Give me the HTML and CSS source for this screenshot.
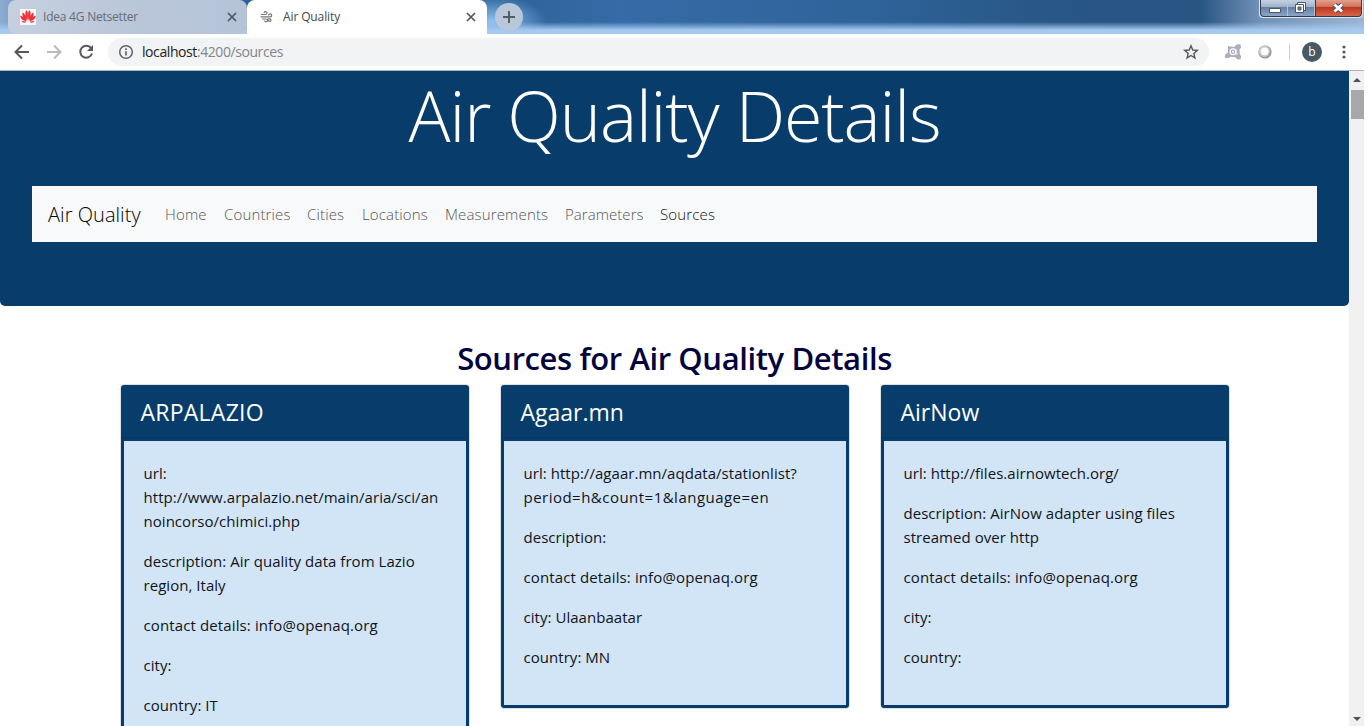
FILE: index.html
```
<!DOCTYPE html>
<html lang="en">
<head>
<meta charset="utf-8">
<title>Air Quality</title>
<link rel="stylesheet" href="styles.css">
</head>
<body>
<div class="window">
  <div class="tabstrip">
    <div class="tab tab-idle">
      <svg class="favicon" width="16" height="16" viewBox="0 0 16 16"><path fill="#f4f6f9" d="M0 0h16v16H0z"/><g fill="#ed3338"><path d="M7.6 11C5 8 4.600 3 6.600 1.300 8 2 8.200 7 7.600 11zM8.400 11C11 8 11.400 3 9.400 1.300 8 2 7.800 7 8.400 11zM7 11.300C3.800 9.800 1.500 6 2.600 3.400 4.500 4 6.500 8 7 11.300zM9 11.300c3.200-1.500 5.500-5.300 4.400-7.900C11.500 4 9.500 8 9 11.300zM6.600 12C3 12.300.3 9.500.3 6.800 3 7 5.300 9.500 6.600 12zM9.400 12c3.600.3 6.300-2.500 6.300-5.200C13 7 10.700 9.500 9.400 12zM6.500 12.500C5 14.300 2.500 14 1.500 12.100zM9.500 12.500c1.500 1.800 4 1.500 5-.4z"/></g></svg>
      <span class="tab-title title-idle">Idea 4G Netsetter</span>
      <svg class="tab-x" width="10" height="10" viewBox="0 0 10 10"><path d="M1 1l8 8M9 1L1 9"/></svg>
    </div>
    <div class="tab tab-active">
      <svg class="favicon" width="16" height="16" viewBox="0 0 16 16" fill="none" stroke="#777" stroke-width="1.200" stroke-linecap="round"><path d="M2.500 5.500h4a1.400 1.400 0 1 0-1.300-1.800M2 7.800h9.200a1.500 1.500 0 1 0-1.500-1.700M3.500 10h3.600a1.400 1.400 0 1 1-1.300 1.800M9 9.800h1.700a1.300 1.300 0 1 1-1.200 1.700"/></svg>
      <span class="tab-title title-active">Air Quality</span>
      <svg class="tab-x" width="10" height="10" viewBox="0 0 10 10"><path d="M1 1l8 8M9 1L1 9"/></svg>
    </div>
    <div class="strip-rest">
      <svg class="new-tab" width="28" height="28" viewBox="0 0 28 28"><circle cx="14" cy="14" r="14" fill="#b9c7da"/><path d="M14 8v12M8 14h12" stroke="#535a63" stroke-width="2"/></svg>
    </div>
    <svg class="win-buttons" width="104" height="19" viewBox="0 0 104 19">
      <defs>
        <linearGradient id="glass" x1="0" y1="0" x2="0" y2="1"><stop offset="0" stop-color="#c5d2e2"/><stop offset=".44" stop-color="#9eb1c9"/><stop offset=".46" stop-color="#6380a5"/><stop offset="1" stop-color="#8ba5c5"/></linearGradient>
        <linearGradient id="red" x1="0" y1="0" x2="0" y2="1"><stop offset="0" stop-color="#e2a18e"/><stop offset=".44" stop-color="#d06e55"/><stop offset=".46" stop-color="#bb3720"/><stop offset="1" stop-color="#d4674b"/></linearGradient>
      </defs>
      <path d="M0-1v15q0 4 4 4h96q4 0 4-4V-1z" fill="#dce6f2"/>
      <path d="M1-1v14q0 4 4 4h94q4 0 4-4V-1z" fill="#303b4b"/>
      <path d="M2 0v13q0 3 3 3h23V0zM29 0h26v16H29z" fill="url(#glass)"/>
      <path d="M57 0h45v13q0 3-3 3H57z" fill="url(#red)"/>
      <path d="M28.500 0v16M55.500 0v16" stroke="#b3c2d5"/>
      <path d="M10.500 8.500h11v4h-11z" fill="#fff" stroke="#4c5668"/>
      <path d="M38.500 2.500h8v8h-8z" fill="#fff" stroke="#4c5668"/><path d="M36.500 4.500h8v8h-8z" fill="#fff" stroke="#4c5668"/><path d="M39 7h3v3h-3z" fill="#6680a4" stroke="#4c5668"/>
      <path d="M75.500 4.500l7.500 7M83 4.500l-7.500 7" stroke="#555063" stroke-width="5"/><path d="M75.500 4.500l7.500 7M83 4.500l-7.500 7" stroke="#fff" stroke-width="2.800"/>
    </svg>
  </div>

  <div class="toolbar">
    <svg class="nav-icon" width="16" height="16" viewBox="0 0 16 16"><path d="M15 8H2M8 1.500L1.500 8 8 14.500" stroke="#55585c"/></svg>
    <svg class="nav-icon" width="16" height="16" viewBox="0 0 16 16"><path d="M1 8h13M8 1.500L14.500 8 8 14.500" stroke="#b8babc"/></svg>
    <svg class="nav-icon" width="16" height="16" viewBox="0 0 16 16"><path d="M13.200 4.200A6 6 0 1 0 14 9.500" stroke="#55585c"/><path d="M15 1v6H9z" fill="#55585c"/></svg>
    <div class="omnibox">
      <svg width="16" height="16" viewBox="0 0 16 16"><circle cx="8" cy="8" r="6.300" fill="none" stroke="#5f6368" stroke-width="1.500"/><path d="M8 7.200v4.300M8 4.300v1.700" stroke="#5f6368" stroke-width="1.700"/></svg>
      <span class="url">localhost<span class="path">:4200/sources</span></span>
      <svg class="star" width="16" height="16" viewBox="0 0 16 16"><path d="M8 1.800l1.750 4.200 4.550.4-3.450 3 1.050 4.500L8 11.500l-3.900 2.400 1.050-4.500-3.450-3 4.550-.4z" fill="none" stroke="#55585c" stroke-width="1.400"/></svg>
    </div>
    <svg class="ext" width="18" height="18" viewBox="0 0 18 18"><path d="M4 3l6 1 3-2.800 3.500.3.500 3-1.500 2 .2 4.500 1.600 2.500-.8 2.800-3 .2-2-2.300-4.500-.4L4 15.300l-3.300-.8.300-2.700L4 9.500z" fill="#adadbb"/><circle cx="9" cy="8.800" r="2.900" fill="none" stroke="#fff" stroke-width="1.200"/><circle cx="9" cy="8.800" r="1.100" fill="#fff"/><path d="M12 6v5h1.500" fill="none" stroke="#fff"/></svg>
    <svg class="ext" width="14" height="14" viewBox="0 0 14 14"><circle cx="7" cy="7" r="6.600" fill="#999"/><circle cx="6.300" cy="6.300" r="5.700" fill="#c8c8c8"/><circle cx="6.700" cy="6.300" r="3.900" fill="#fff"/></svg>
    <span class="divider"></span>
    <span class="avatar">b</span>
    <svg class="dots" width="4" height="14" viewBox="0 0 4 14" fill="#55585c"><circle cx="2" cy="2" r="1.600"/><circle cx="2" cy="7" r="1.600"/><circle cx="2" cy="12" r="1.600"/></svg>
  </div>

  <div class="viewport">
    <main class="page">
      <header class="jumbotron">
        <h1>Air Quality Details</h1>
        <nav class="navbar">
          <a class="brand">Air Quality</a>
          <a class="link home">Home</a><a class="link countries">Countries</a><a class="link cities">Cities</a><a class="link locations">Locations</a><a class="link measurements">Measurements</a><a class="link parameters">Parameters</a><a class="link sources current">Sources</a>
        </nav>
      </header>
      <h2>Sources for Air Quality Details</h2>
      <section class="deck">
        <article class="card">
          <h3 class="upper">ARPALAZIO</h3>
          <div class="body">
            <p>url:<br>http://www.arpalazio.net/main/aria/sci/an<br>noincorso/chimici.php</p>
            <p>description: Air quality data from Lazio<br>region, Italy</p>
            <p class="contact">contact details: info@openaq.org</p>
            <p>city:</p>
            <p>country: IT</p>
          </div>
        </article>
        <article class="card">
          <h3>Agaar.mn</h3>
          <div class="body">
            <p>url: http://agaar.mn/aqdata/stationlist?<br><span class="query">period=h&amp;count=1&amp;language=en</span></p>
            <p>description:</p>
            <p class="contact">contact details: info@openaq.org</p>
            <p>city: Ulaanbaatar</p>
            <p>country: MN</p>
          </div>
        </article>
        <article class="card">
          <h3>AirNow</h3>
          <div class="body">
            <p>url: http://files.airnowtech.org/</p>
            <p>description: AirNow adapter using files<br>streamed over http</p>
            <p class="contact">contact details: info@openaq.org</p>
            <p>city:</p>
            <p>country:</p>
          </div>
        </article>
      </section>
    </main>
    <aside class="scrollbar">
      <svg width="8" height="4" viewBox="0 0 8 4"><path d="M0 4l4-4 4 4z" fill="#505050"/></svg>
      <span class="thumb"></span>
      <svg class="down" width="8" height="4" viewBox="0 0 8 4"><path d="M0 0l4 4 4-4z" fill="#505050"/></svg>
    </aside>
  </div>
</div>
</body>
</html>
```
FILE: styles.css
```
* { box-sizing: border-box; }
body { margin: 0; background: #fff; font-family: "Open Sans", "Noto Sans", sans-serif; overflow: hidden; }
h1, h2, h3, p { margin: 0; font-weight: 400; }
svg { display: block; flex: none; }
.window { width: 1364px; height: 726px; display: flex; flex-direction: column; overflow: hidden; }

.tabstrip { position: relative; height: 34px; flex: none; display: flex; padding-left: 8px;
  background: linear-gradient(180deg, rgba(165,201,240,0) 22px, #a5c9f0 30px), radial-gradient(ellipse 55px 26px at 492px 22px, #8fc4f2, rgba(143,196,242,0)), linear-gradient(90deg, #8eacd0 0, #7499c5 20px, #2d6096 240px, #2d6298 480px, #356ba6 620px, #2f649b 850px, #285685 1060px, #285582 1200px, #7291b8 1260px, #9db5d2 1364px); }
.tab { height: 34px; display: flex; align-items: center; border-radius: 8px 8px 0 0; padding-left: 12px; }
.tab-idle { width: 239px; background: linear-gradient(100deg, #c6d0df, #b8c5d8 60%, #b5c3d9); border-radius: 8px; }
.tab-active { width: 240px; background: #fff; }
.tab-title { font-size: 12px; margin-left: 7px; white-space: nowrap; line-height: 16px; }
.title-idle { color: #656c77; letter-spacing: -.22px; }
.title-active { color: #45484c; letter-spacing: -.12px; margin-left: 8px; }
.tab-x { margin-left: auto; margin-right: 10px; fill: none; stroke: #4e565f; stroke-width: 1.7; }
.tab-active .tab-x { margin-right: 11px; }
.strip-rest { display: flex; align-items: center; padding-left: 8px; }
.win-buttons { position: absolute; right: 1px; top: 0; }

.toolbar { height: 37px; flex: none; display: flex; align-items: center; background: #fff; border-bottom: 1px solid #b3b3b3; padding-left: 14px; }
.nav-icon { margin-right: 16px; fill: none; stroke-width: 2; }
.omnibox { margin-left: -2px; width: 1101px; height: 28px; border-radius: 14px; background: #f1f3f4; display: flex; align-items: center; padding: 0 10px; }
.url { font-size: 14px; line-height: 20px; margin-left: 8px; color: #222; letter-spacing: -.42px; }
.path { color: #80868b; }
.star { margin-left: auto; }
.ext { margin-left: 15px; }
.ext + .ext { margin-left: 16px; }
.divider { width: 1px; height: 16px; background: #ccc; margin: 0 12px 0 17px; }
.avatar { width: 20px; height: 20px; border-radius: 50%; background: #455a64; color: #fff; font-size: 12px; line-height: 19px; text-align: center; }
.dots { margin-left: 20px; }

.viewport { height: 655px; display: flex; }
.page { width: 1349px; height: 655px; }
.jumbotron { height: 235px; background: #083d6b; border-radius: 0 0 5px 5px; padding: 0 32px; }
h1 { height: 115px; font-size: 70px; line-height: 89px; font-weight: 300; color: #fff; text-align: center; letter-spacing: -1.12px; white-space: nowrap; }
.navbar { height: 56px; background: #f8f9fa; display: flex; align-items: center; padding-left: 16px; white-space: nowrap; }
.brand { width: 109px; font-size: 20px; font-weight: 300; color: #000; letter-spacing: .05px; }
.link { font-size: 15px; font-weight: 300; color: #555; padding-left: 8px; letter-spacing: .15px; }
.home { width: 59px; } .countries { width: 83px; } .cities { width: 55px; } .locations { width: 83px; }
.measurements { width: 120px; } .parameters { width: 95px; letter-spacing: .05px; }
.current { color: #111; }
h2 { height: 78px; padding-top: 31px; font-size: 31px; line-height: 42px; font-weight: 600; color: #02023e; text-align: center; letter-spacing: -.4px; white-space: nowrap; }
.deck { display: flex; justify-content: center; align-items: flex-start; gap: 30px; }
.card { width: 350px; border: 1px solid #dfdfdf; border-radius: 4px; overflow: hidden; }
h3 { height: 53px; background: #083d6b; color: #fff; font-size: 23px; line-height: 55px; padding-left: 20px; border-bottom: 1px solid #073761; }
.upper { letter-spacing: .25px; }
.body { border: 3px solid #083d6b; background: #d2e5f6; padding: 20px; color: #111319; }
.body p { font-size: 15px; line-height: 24px; margin-bottom: 16px; white-space: nowrap; letter-spacing: .04px; }
.body .contact { letter-spacing: .12px; }
.query { letter-spacing: .48px; }
.scrollbar { width: 15px; background: #f0f0f0; display: flex; flex-direction: column; align-items: center; padding: 7px 0 5px; }
.thumb { width: 13px; height: 29px; margin: 8px 0 0 2px; background: #a8a8a8; }
.down { margin-top: auto; }
```
